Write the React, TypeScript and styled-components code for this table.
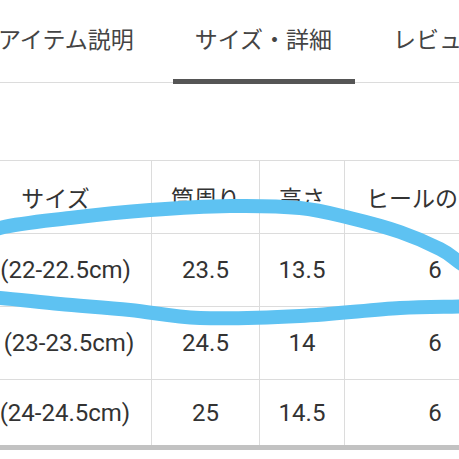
import React from 'react';
import styled, { createGlobalStyle } from 'styled-components';

const GlobalStyle = createGlobalStyle`
  html, body {
    margin: 0;
    padding: 0;
    background: #fff;
    overflow: hidden;
  }
  body {
    font-family: Roboto, "Noto Sans CJK JP", sans-serif;
    color: #333;
  }
`;

const Page = styled.div`
  position: relative;
  width: 459px;
  height: 459px;
  overflow: hidden;
  background: #fff;
`;

const TabBar = styled.div`
  display: flex;
  gap: 16px;
  margin-left: -24px;
  height: 83px;
  border-bottom: 1px solid #dcdcdc;
  box-sizing: border-box;
  white-space: nowrap;
`;

const Tab = styled.div<{ $active?: boolean }>`
  position: relative;
  flex: none;
  padding: 0 23px 0 22px;
  height: 83px;
  line-height: 82px;
  font-size: 23px;
  color: #444;
  &::after {
    content: '';
    display: ${(p) => (p.$active ? 'block' : 'none')};
    position: absolute;
    left: 0;
    right: 0;
    bottom: -1px;
    height: 5px;
    background: #555;
  }
`;

const TableWrap = styled.div`
  margin-top: 77px;
  margin-left: -41px;
`;

const Table = styled.table`
  border-collapse: collapse;
  table-layout: fixed;
  width: 562px;
  font-size: 24px;
  color: #333;
  white-space: nowrap;
`;

const Cell = styled.td<{ $w?: number; $last?: boolean }>`
  width: ${(p) => (p.$w ? `${p.$w}px` : 'auto')};
  height: ${(p) => (p.$last ? 65 : 72)}px;
  padding: 0;
  text-align: center;
  border: 1px solid #dcdcdc;
  border-bottom: ${(p) => (p.$last ? '5px solid #c2c2c2' : '1px solid #dcdcdc')};
  font-weight: 400;
`;

const HeadCell = styled(Cell).attrs({ as: 'th' })`
  font-size: 23px;
`;

const Scribble = styled.svg`
  position: absolute;
  left: 0;
  top: 0;
  pointer-events: none;
`;

const headers = ['サイズ', '筒周り', '高さ', 'ヒールの高さ'];
const widths = [191, 107, 84, 180];
const rows = [
  ['S (22-22.5cm)', '23.5', '13.5', '6'],
  ['M (23-23.5cm)', '24.5', '14', '6'],
  ['L (24-24.5cm)', '25', '14.5', '6'],
];

// hand-drawn loop around the first size row
const loop: [number, number][] = [
  [-40, 246], [0, 228], [70, 218], [150, 210], [230, 206], [300, 208],
  [350, 218], [400, 232], [440, 249], [459, 262], [490, 285], [500, 302],
  [470, 306], [400, 308], [300, 316], [200, 318], [130, 310], [60, 304],
  [0, 298], [-40, 296],
];

const smoothPath = (pts: [number, number][]) => {
  let d = `M ${pts[0][0]} ${pts[0][1]}`;
  for (let i = 0; i < pts.length - 1; i++) {
    const p0 = pts[i - 1] || pts[i];
    const p1 = pts[i];
    const p2 = pts[i + 1];
    const p3 = pts[i + 2] || p2;
    const c1x = p1[0] + (p2[0] - p0[0]) / 6;
    const c1y = p1[1] + (p2[1] - p0[1]) / 6;
    const c2x = p2[0] - (p3[0] - p1[0]) / 6;
    const c2y = p2[1] - (p3[1] - p1[1]) / 6;
    d += ` C ${c1x} ${c1y}, ${c2x} ${c2y}, ${p2[0]} ${p2[1]}`;
  }
  return d;
};

const App = () => {
  return (
    <Page>
      <GlobalStyle />
      <TabBar>
        <Tab>アイテム説明</Tab>
        <Tab $active>サイズ・詳細</Tab>
        <Tab>レビュー</Tab>
      </TabBar>
      <TableWrap>
        <Table>
          <tbody>
            <tr>
              {headers.map((h, i) => (
                <HeadCell key={i} $w={widths[i]}>
                  {h}
                </HeadCell>
              ))}
            </tr>
            {rows.map((r, ri) => (
              <tr key={ri}>
                {r.map((v, ci) => (
                  <Cell key={ci} $last={ri === rows.length - 1}>
                    {v}
                  </Cell>
                ))}
              </tr>
            ))}
          </tbody>
        </Table>
      </TableWrap>
      <Scribble width="459" height="459" viewBox="0 0 459 459">
        <path
          d={smoothPath(loop)}
          fill="none"
          stroke="#5ec2f2"
          strokeWidth="14"
          strokeLinecap="round"
          strokeLinejoin="round"
        />
      </Scribble>
    </Page>
  );
};

export default App;
